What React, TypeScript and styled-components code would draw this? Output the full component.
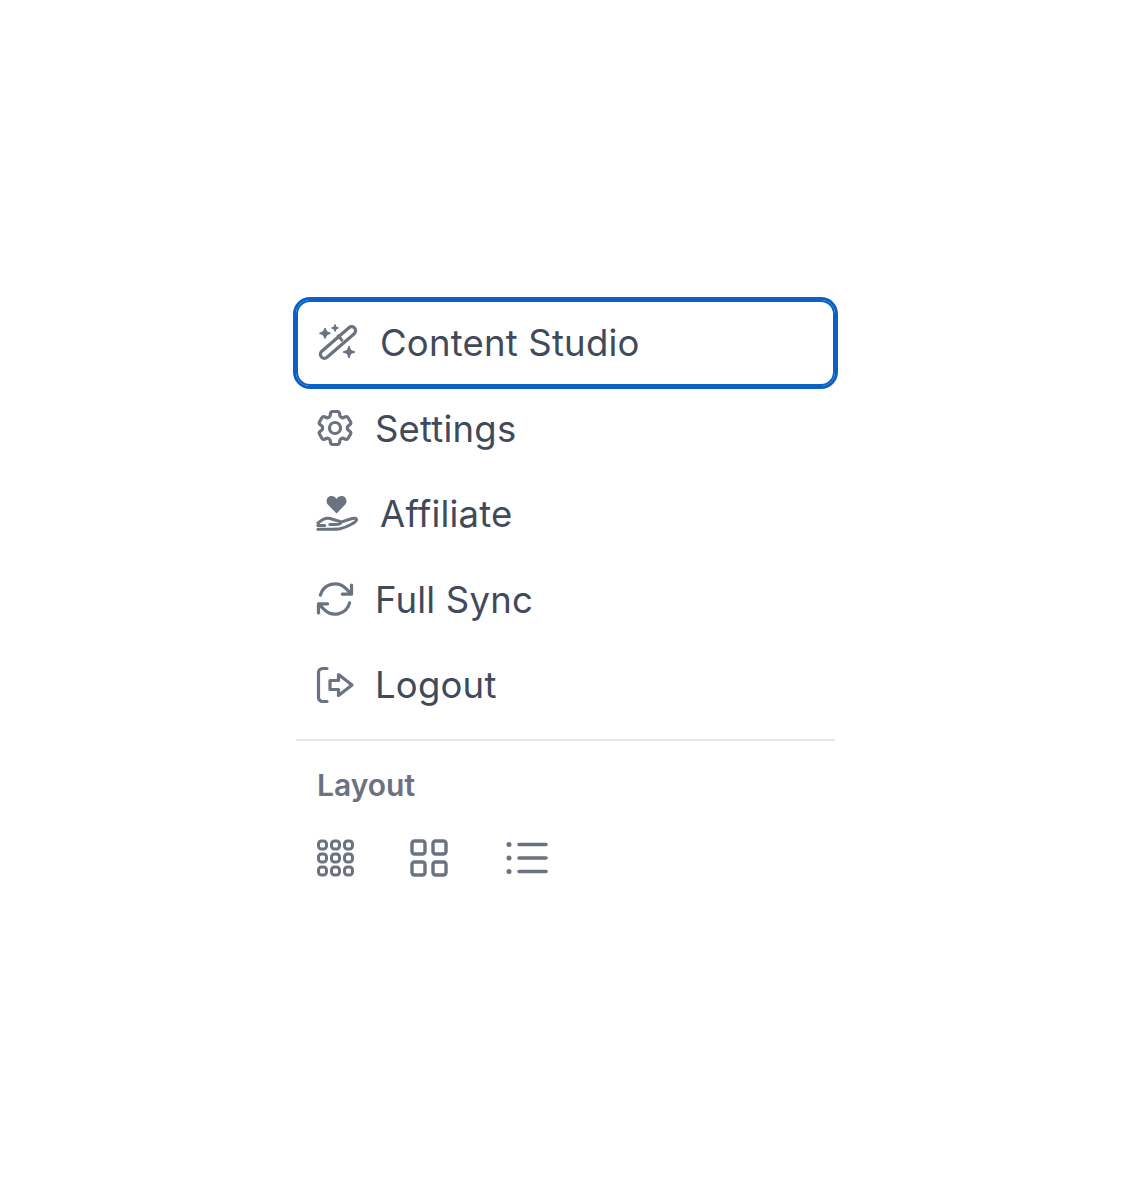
import React from 'react';
import styled, { createGlobalStyle } from 'styled-components';
import { HiOutlineArrowPath, HiOutlineCog6Tooth } from 'react-icons/hi2';

const GlobalStyle = createGlobalStyle`
  html, body {
    margin: 0;
    background: #fff;
    font-family: Inter, "Noto Sans", sans-serif;
  }
`;

const Page = styled.div`
  height: 1200px;
  padding: 300px 0 0 296px;
  box-sizing: border-box;
`;

const Menu = styled.nav`
  width: 539px;
`;

const MenuRow = styled.div<{ $active?: boolean }>`
  display: flex;
  align-items: center;
  height: 85.5px;
  padding: 1px 0 0 20px;
  box-sizing: border-box;
  gap: 19px;
  border-radius: 14px;
  color: #414a5a;
  font-size: 36.5px;
  letter-spacing: 0.2px;
  ${(p) => p.$active && 'box-shadow: 0 0 0 3px #0b60c4, inset 0 0 0 2px #0b60c4;'}
`;

const IconSlot = styled.span<{ $width?: number }>`
  display: flex;
  align-items: center;
  flex: none;
  width: ${(p) => p.$width ?? 40}px;
  color: #6b7280;

  svg {
    display: block;
  }
`;

const HeroIcon = styled.span`
  display: flex;
  margin: -1px 0 0 -3px;

  svg path {
    stroke-width: 1.75;
  }
`;

const Divider = styled.hr`
  margin: 11px 0 0;
  border: 0;
  height: 2px;
  background: #e5e7eb;
`;

const SectionLabel = styled.div`
  margin: 24px 0 0 21px;
  color: #6b7280;
  font-size: 30px;
  font-weight: 600;
  line-height: 40px;
`;

const LayoutButtons = styled.div`
  display: flex;
  align-items: center;
  margin: 34px 0 0 20px;
  gap: 55px;
  color: #6b7280;

  svg {
    display: block;
  }
`;

const WandIcon = () => (
  <svg width="44" height="40" viewBox="0 0 44 40" fill="none" stroke="currentColor" strokeWidth="3.2" strokeLinejoin="round">
    <rect x="-4" y="-22" width="8" height="44" rx="4" transform="translate(22 19.500) rotate(49)" />
    <path d="M21.400 12l5.200 6" strokeWidth="2.800" />
    <path d="M9 5l1.700 3.600L14.500 10.300l-3.800 1.700L9 15.500l-1.700-3.500L3.500 10.300l3.800-1.700z" fill="currentColor" strokeWidth="1" />
    <path d="M19 1.500l1 2.500 2.500 1-2.500 1-1 2.500-1-2.500-2.500-1 2.500-1z" fill="currentColor" strokeWidth="1" />
    <path d="M33 23l1.700 4.300 4.300 1.700-4.300 1.700-1.700 4.300-1.700-4.300-4.300-1.700 4.300-1.700z" fill="currentColor" strokeWidth="1" />
  </svg>
);

const HandHeartIcon = () => (
  <svg width="43" height="42" viewBox="0 0 45 42" fill="none" stroke="currentColor" strokeWidth="3.200" strokeLinecap="round" strokeLinejoin="round">
    <path
      d="M21.500 20.500L12.600 11.400C9.600 8.200 11.400 2.200 16 2.200c2.600 0 4.400 1.200 5.500 3.200 1.100-2 2.900-3.200 5.500-3.200 4.600 0 6.400 6 3.400 9.200z"
      fill="currentColor"
      stroke="none"
    />
    <path d="M2 30.500c3.500-3 7-5 10.500-5 3.500 0 6.500 2 10 2.500 2.500.4 3.500 1.500 3 2.700-.4 1-2 1.300-5.500 1.300h-5.500" />
    <path d="M26 29.500l11-3.500c3-1 5.500-.5 5.500 1 0 1.500-2 2.800-6 5-4 2.300-7.500 3.500-11.500 4.500-2.500.5-4.500.5-7 .5H2" />
    <path d="M2 33h7" />
  </svg>
);

const LogoutIcon = () => (
  <svg width="40" height="40" viewBox="0 0 40 40" fill="none" stroke="currentColor" strokeWidth="3.200" strokeLinecap="round" strokeLinejoin="round">
    <path d="M11 3.500H6.500a4 4 0 0 0-4 4v25a4 4 0 0 0 4 4H11" />
    <path d="M14 15.500h8.500V9.500L36 20 22.500 30.500v-6H14z" />
  </svg>
);

const CompactGridIcon = () => (
  <svg width="39" height="38" viewBox="0 0 39 38" fill="none" stroke="currentColor" strokeWidth="3">
    {[0, 1, 2].map((row) =>
      [0, 1, 2].map((col) => (
        <rect key={`${row}-${col}`} x={2.5 + col * 13} y={2 + row * 13} width="8" height="8" rx="3" />
      )),
    )}
  </svg>
);

const LargeGridIcon = () => (
  <svg width="41" height="38" viewBox="0 0 41 38" fill="none" stroke="currentColor" strokeWidth="3.400">
    <rect x="2" y="2" width="13" height="13" rx="2.500" />
    <rect x="23" y="2" width="13" height="13" rx="2.500" />
    <rect x="2" y="23" width="13" height="13" rx="2.500" />
    <rect x="23" y="23" width="13" height="13" rx="2.500" />
  </svg>
);

const ListIcon = () => (
  <svg width="43" height="38" viewBox="0 0 43 38" fill="none" stroke="currentColor" strokeWidth="3.600" strokeLinecap="round">
    <path d="M13 5.500h27M13 19h27M13 32.500h27" />
    <circle cx="3" cy="5.500" r="2.500" fill="currentColor" stroke="none" />
    <circle cx="3" cy="19" r="2.500" fill="currentColor" stroke="none" />
    <circle cx="3" cy="32.500" r="2.500" fill="currentColor" stroke="none" />
  </svg>
);

const App: React.FC = () => (
  <Page>
    <GlobalStyle />
    <Menu>
      <MenuRow $active>
        <IconSlot $width={45}>
          <WandIcon />
        </IconSlot>
        Content Studio
      </MenuRow>
      <MenuRow>
        <IconSlot>
          <HeroIcon>
            <HiOutlineCog6Tooth size={44} />
          </HeroIcon>
        </IconSlot>
        Settings
      </MenuRow>
      <MenuRow>
        <IconSlot $width={45}>
          <HandHeartIcon />
        </IconSlot>
        Affiliate
      </MenuRow>
      <MenuRow>
        <IconSlot>
          <HeroIcon>
            <HiOutlineArrowPath size={44} />
          </HeroIcon>
        </IconSlot>
        Full Sync
      </MenuRow>
      <MenuRow>
        <IconSlot>
          <LogoutIcon />
        </IconSlot>
        Logout
      </MenuRow>
    </Menu>
    <Menu>
      <Divider />
      <SectionLabel>Layout</SectionLabel>
      <LayoutButtons>
        <CompactGridIcon />
        <LargeGridIcon />
        <ListIcon />
      </LayoutButtons>
    </Menu>
  </Page>
);

export default App;
